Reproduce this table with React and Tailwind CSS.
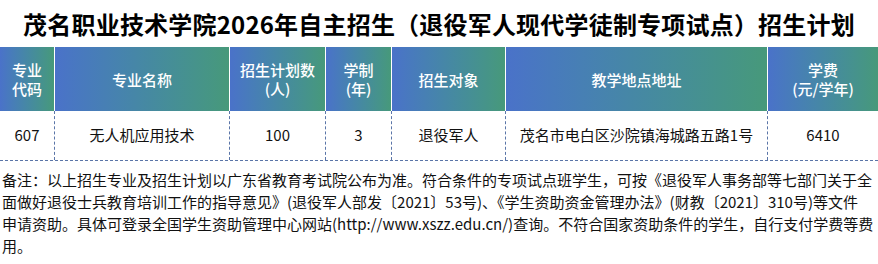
const COLS = "grid grid-cols-[54px_175px_96px_66px_114px_262px_111px]";

const headers = [
  ["专业", "代码"],
  ["专业名称"],
  ["招生计划数", "(人)"],
  ["学制", "(年)"],
  ["招生对象"],
  ["教学地点地址"],
  ["学费", "(元/学年)"],
];

const row = ["607", "无人机应用技术", "100", "3", "退役军人", "茂名市电白区沙院镇海城路五路1号", "6410"];

const notes = [
  "备注：以上招生专业及招生计划以广东省教育考试院公布为准。符合条件的专项试点班学生，可按《退役军人事务部等七部门关于全",
  "面做好退役士兵教育培训工作的指导意见》(退役军人部发〔2021〕53号)、《学生资助资金管理办法》(财教〔2021〕310号)等文件",
  "申请资助。具体可登录全国学生资助管理中心网站(http://www.xszz.edu.cn/)查询。不符合国家资助条件的学生，自行支付学费等费",
  "用。",
];

export default function App() {
  return (
    <div className="w-[878px] h-[264px] overflow-hidden bg-white font-['Noto_Sans_CJK_SC','Noto_Sans',sans-serif] text-[#111]">
      <h1 className="h-[47px] flex items-center justify-center text-[24px] font-bold tracking-[0.2px] text-black">
        茂名职业技术学院2026年自主招生（退役军人现代学徒制专项试点）招生计划
      </h1>

      <div className={`${COLS} h-[64px]`}>
        {headers.map((h, i) => (
          <div
            key={i}
            className={`flex flex-col items-center justify-center bg-gradient-to-r from-[#4a72c9] to-[#47997a] text-[15px] font-medium leading-[19px] text-white ${
              i > 0 ? "border-l border-white" : ""
            }`}
          >
            {h.map((t) => (
              <span key={t}>{t}</span>
            ))}
          </div>
        ))}
      </div>

      <div className={`${COLS} h-[50px] border-b border-dashed border-[#5a75a8]`}>
        {row.map((t, i) => (
          <div
            key={i}
            className={`flex items-center justify-center text-[15px] ${
              i > 0 ? "border-l border-dashed border-[#5a75a8]" : ""
            }`}
          >
            {t}
          </div>
        ))}
      </div>

      <div className="pl-[2px] pt-[8px] text-[15px] leading-[22px] text-[#111]">
        {notes.map((l) => (
          <div key={l} className="whitespace-nowrap">
            {l}
          </div>
        ))}
      </div>
    </div>
  );
}
